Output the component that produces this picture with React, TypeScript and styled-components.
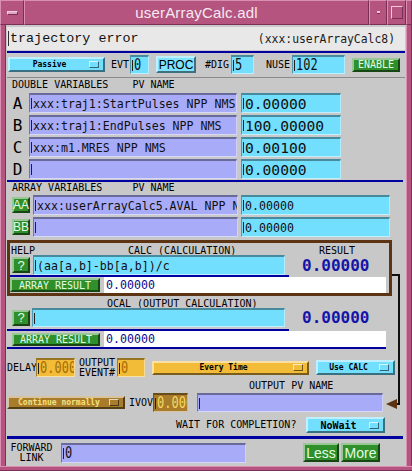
import React from "react";
import styled, { createGlobalStyle, css } from "styled-components";

const PINK = "#b4547f";
const PINK_LIGHT = "#d98fb1";
const PINK_DARK = "#7a3056";
const GREY = "#c8c8c8";
const CYAN = "#73dfff";
const LAV = "#a8abf7";
const GREEN = "#2f8f2a";
const NAVY = "#0000a0";
const BROWN = "#5c3414";
const YELLOW = "#f2bb38";
const GOLD = "#a87c2a";
const RESULT_BLUE = "#1414a8";

const MONO = `"DejaVu Sans Mono", "Liberation Mono", monospace`;
const SANS = `"Liberation Sans", Arial, sans-serif`;

const GlobalStyle = createGlobalStyle`
  html, body { margin: 0; padding: 0; }
  body { background: ${GREY}; overflow: hidden; }
  * { box-sizing: border-box; }
`;

const bevel = (light: string, dark: string, w = 1) => css`
  border-style: solid;
  border-width: ${w}px;
  border-color: ${light} ${dark} ${dark} ${light};
`;

const Window = styled.div`
  position: relative;
  width: 412px;
  height: 471px;
  background: ${PINK};
  display: flex;
  flex-direction: column;
`;

const TitleBar = styled.div`
  display: flex;
  height: 25px;
  flex: none;
`;

const TitleBox = styled.div<{ $w: number }>`
  flex: none;
  width: ${(p) => p.$w}px;
  height: 100%;
  display: flex;
  align-items: center;
  justify-content: center;
  background: ${PINK};
  ${bevel(PINK_LIGHT, PINK_DARK)};
`;

const MinusGlyph = styled.div`
  width: 11px;
  height: 4px;
  background: #e3a6c2;
  ${bevel("#f3d0e0", PINK_DARK)};
`;

const DotGlyph = styled.div`
  width: 3px;
  height: 3px;
  background: #f0c8da;
  border-bottom: 1px solid ${PINK_DARK};
`;

const MaxGlyph = styled.div`
  width: 12px;
  height: 13px;
  ${bevel("#f0c8da", PINK_DARK)};
`;

const Title = styled.div`
  flex: 1;
  display: flex;
  align-items: center;
  justify-content: center;
  font-family: ${SANS};
  font-size: 15px;
  letter-spacing: 0.2px;
  color: #f6eaf0;
  ${bevel(PINK_LIGHT, PINK_DARK)};
`;

const FrameRow = styled.div`
  display: flex;
  height: 441px;
  flex: none;
`;

const SideEdge = styled.div`
  flex: none;
  width: 6px;
  height: 100%;
  background: ${PINK};
  border-left: 1px solid ${PINK_LIGHT};
  border-right: 1px solid ${PINK_DARK};
`;

const BottomEdge = styled.div`
  flex: none;
  height: 5px;
  background: ${PINK};
  border-top: 1px solid ${PINK_LIGHT};
  border-bottom: 1px solid ${PINK_DARK};
`;

const Body = styled.div`
  flex: none;
  width: 400px;
  height: 441px;
  background: ${GREY};
  display: flex;
  flex-direction: column;
  font-family: ${MONO};
`;

const DescBand = styled.div`
  flex: none;
  margin: 2px 0 0 1px;
  width: 398px;
  height: 23px;
  background: #e8e8e8;
  display: flex;
  align-items: center;
  padding: 0 10px 0 1px;
`;

const DescText = styled.span`
  display: flex;
  align-items: center;
  font-family: "Liberation Mono", "Courier New", monospace;
  font-size: 13.4px;
  color: #101010;
  &::before {
    content: "";
    width: 1px;
    height: 15px;
    background: #303030;
    margin-right: 1px;
  }
`;

const RecordName = styled.span`
  margin-left: auto;
  font-family: ${MONO};
  font-size: 11.4px;
  color: #1a1a1a;
`;

const Rule = styled.div<{ $w: number; $h?: number; $mt?: number; $ml?: number; $c?: string }>`
  flex: none;
  width: ${(p) => p.$w}px;
  height: ${(p) => p.$h ?? 2}px;
  margin-top: ${(p) => p.$mt ?? 0}px;
  margin-left: ${(p) => p.$ml ?? 0}px;
  background: ${(p) => p.$c ?? NAVY};
`;

const Row = styled.div<{ $h: number; $mt?: number; $pl?: number }>`
  flex: none;
  display: flex;
  align-items: center;
  height: ${(p) => p.$h}px;
  margin-top: ${(p) => p.$mt ?? 0}px;
  padding-left: ${(p) => p.$pl ?? 0}px;
`;

const Stack = styled.div<{ $mt?: number; $gap?: number }>`
  flex: none;
  display: flex;
  flex-direction: column;
  gap: ${(p) => p.$gap ?? 2}px;
  margin-top: ${(p) => p.$mt ?? 0}px;
`;

const Label = styled.span<{ $ml?: number; $w?: number; $lh?: number; $center?: boolean }>`
  flex: none;
  display: block;
  margin-left: ${(p) => p.$ml ?? 0}px;
  ${(p) => (p.$w ? `width: ${p.$w}px;` : "")}
  font-family: ${MONO};
  font-size: 10px;
  line-height: ${(p) => p.$lh ?? 10}px;
  color: #000;
  white-space: pre;
  text-align: ${(p) => (p.$center ? "center" : "left")};
`;

const SectionLabel = styled.div<{ $mt?: number; $h: number; $pl: number }>`
  flex: none;
  height: ${(p) => p.$h}px;
  line-height: ${(p) => p.$h}px;
  margin-top: ${(p) => p.$mt ?? 0}px;
  padding-left: ${(p) => p.$pl}px;
  font-family: ${MONO};
  font-size: 10px;
  color: #000;
  white-space: pre;
`;

const Entry = styled.div<{
  $w: number;
  $h: number;
  $bg: string;
  $fg?: string;
  $ml?: number;
  $size?: number;
}>`
  flex: none;
  width: ${(p) => p.$w}px;
  height: ${(p) => p.$h}px;
  margin-left: ${(p) => p.$ml ?? 0}px;
  background: ${(p) => p.$bg};
  color: ${(p) => p.$fg ?? "#101010"};
  font-family: ${MONO};
  font-size: ${(p) => p.$size ?? 11.6}px;
  display: flex;
  align-items: center;
  padding-left: 1px;
  white-space: pre;
  overflow: hidden;
  border-top: 2px solid rgba(0, 0, 0, 0.38);
  border-left: 1px solid rgba(0, 0, 0, 0.32);
  border-bottom: 1px solid rgba(255, 255, 255, 0.55);
  border-right: 1px solid rgba(255, 255, 255, 0.45);
  &::before {
    content: "";
    flex: none;
    width: 1px;
    height: 11px;
    background: #202020;
    margin-right: 1px;
  }
`;

/* narrow, tall digits used in the small numeric entries */
const Tall = styled.span`
  display: inline-block;
  font-family: ${MONO};
  font-size: 12px;
  transform: scaleY(1.3);
  transform-origin: center;
`;

const Readout = styled.div<{ $w: number; $h: number; $ml?: number }>`
  flex: none;
  width: ${(p) => p.$w}px;
  height: ${(p) => p.$h}px;
  margin-left: ${(p) => p.$ml ?? 0}px;
  background: #ffffff;
  color: #0c0c8c;
  font-family: ${MONO};
  font-size: 11.6px;
  display: flex;
  align-items: center;
  padding-left: 2px;
`;

const Btn = styled.div<{
  $w: number;
  $h: number;
  $ml?: number;
  $bg?: string;
  $fg?: string;
  $size?: number;
  $family?: string;
}>`
  flex: none;
  width: ${(p) => p.$w}px;
  height: ${(p) => p.$h}px;
  margin-left: ${(p) => p.$ml ?? 0}px;
  background: ${(p) => p.$bg ?? GREEN};
  color: ${(p) => p.$fg ?? "#e4fbe4"};
  font-family: ${(p) => p.$family ?? MONO};
  font-size: ${(p) => p.$size ?? 10}px;
  display: flex;
  align-items: center;
  justify-content: center;
  white-space: pre;
  ${bevel("rgba(255,255,255,0.5)", "rgba(0,0,0,0.5)", 2)};
`;

const Menu = styled.div<{ $w: number; $h: number; $ml?: number; $bg: string; $fg?: string; $size?: number }>`
  flex: none;
  width: ${(p) => p.$w}px;
  height: ${(p) => p.$h}px;
  margin-left: ${(p) => p.$ml ?? 0}px;
  background: ${(p) => p.$bg};
  color: ${(p) => p.$fg ?? "#000"};
  font-family: ${MONO};
  font-weight: bold;
  font-size: ${(p) => p.$size ?? 8}px;
  display: flex;
  align-items: center;
  white-space: pre;
  ${bevel("rgba(255,255,255,0.55)", "rgba(0,0,0,0.5)", 2)};
`;

const MenuText = styled.span`
  flex: 1;
  text-align: center;
`;

const MenuMark = styled.span`
  flex: none;
  width: 10px;
  height: 7px;
  margin-right: 4px;
  ${bevel("rgba(255,255,255,0.7)", "rgba(0,0,0,0.55)", 1)};
`;

const Letter = styled.span`
  flex: none;
  width: 23px;
  text-align: center;
  font-family: ${MONO};
  font-size: 16px;
  color: #000;
`;

const CalcBox = styled.div`
  flex: none;
  margin: 3px 0 0 1px;
  width: 385px;
  height: 56px;
  border: 3px solid ${BROWN};
  display: flex;
  flex-direction: column;
`;

const Result = styled.span<{ $ml: number }>`
  flex: none;
  margin-left: ${(p) => p.$ml}px;
  font-family: ${MONO};
  font-weight: bold;
  font-size: 16px;
  color: ${RESULT_BLUE};
`;

const ArrowOverlay = styled.svg`
  position: absolute;
  left: 384px;
  top: 268px;
  width: 20px;
  height: 146px;
  overflow: visible;
`;

export default function App() {
  const doubles = [
    { k: "A", pv: "xxx:traj1:StartPulses NPP NMS", v: "0.00000" },
    { k: "B", pv: "xxx:traj1:EndPulses NPP NMS", v: "100.00000" },
    { k: "C", pv: "xxx:m1.MRES NPP NMS", v: "0.00100" },
    { k: "D", pv: "", v: "0.00000" },
  ];
  const arrays = [
    { k: "AA", pv: "xxx:userArrayCalc5.AVAL NPP NMS", v: "0.00000" },
    { k: "BB", pv: "", v: "0.00000" },
  ];
  return (
    <>
      <GlobalStyle />
      <Window>
        <TitleBar>
          <TitleBox $w={24}>
            <MinusGlyph />
          </TitleBox>
          <Title>userArrayCalc.adl</Title>
          <TitleBox $w={18}>
            <DotGlyph />
          </TitleBox>
          <TitleBox $w={19}>
            <MaxGlyph />
          </TitleBox>
          <TitleBox $w={6} />
        </TitleBar>
        <FrameRow>
          <SideEdge />
          <Body>
            <DescBand>
              <DescText>trajectory error</DescText>
              <RecordName>(xxx:userArrayCalc8)</RecordName>
            </DescBand>
            <Rule $w={398} $h={2} $mt={1} $ml={1} />
            <Row $h={19} $mt={2}>
              <Menu $w={97} $h={15} $ml={2} $bg={CYAN}>
                <MenuText>Passive</MenuText>
                <MenuMark />
              </Menu>
              <Label $ml={6} $w={19}>EVT</Label>
              <Entry $w={19} $h={19} $bg={CYAN}><Tall>0</Tall></Entry>
              <Btn $w={40} $h={17} $ml={7} $bg="#7fe2ff" $fg="#000" $family={SANS} $size={12}>
                PROC
              </Btn>
              <Label $ml={9} $w={24}>#DIG</Label>
              <Entry $w={23} $h={19} $ml={2} $bg={CYAN}><Tall>5</Tall></Entry>
              <Label $ml={12} $w={24}>NUSE</Label>
              <Entry $w={53} $h={19} $ml={2} $bg={CYAN}><Tall>102</Tall></Entry>
              <Btn $w={48} $h={14} $ml={7} $size={10}>ENABLE</Btn>
            </Row>
            <Rule $w={398} $h={1} $mt={3} $ml={1} $c="#8a8a8a" />
            <SectionLabel $h={11} $mt={1} $pl={6}>DOUBLE VARIABLES    PV NAME</SectionLabel>
            <Stack $mt={3} $gap={2}>
              {doubles.map((d) => (
                <Row key={d.k} $h={20}>
                  <Letter>{d.k}</Letter>
                  <Entry $w={208} $h={20} $bg={LAV}>{d.pv}</Entry>
                  <Entry $w={100} $h={20} $ml={4} $bg={CYAN} $size={14.6}>{d.v}</Entry>
                </Row>
              ))}
            </Stack>
            <Rule $w={396} $h={2} $mt={1} $ml={1} />
            <SectionLabel $h={10} $mt={1} $pl={6}>ARRAY VARIABLES     PV NAME</SectionLabel>
            <Stack $mt={2} $gap={2}>
              {arrays.map((a) => (
                <Row key={a.k} $h={20} $pl={6}>
                  <Btn $w={18} $h={16} $family={SANS} $size={12}>{a.k}</Btn>
                  <Entry $w={205} $h={20} $ml={3} $bg={LAV}>{a.pv}</Entry>
                  <Entry $w={149} $h={20} $ml={3} $bg={CYAN}>{a.v}</Entry>
                </Row>
              ))}
            </Stack>
            <CalcBox>
              <Row $h={9} $mt={3}>
                <Label $ml={1} $w={24} $lh={9}>HELP</Label>
                <Label $ml={93} $w={110} $lh={9}>CALC (CALCULATION)</Label>
                <Label $ml={81} $w={40} $lh={9}>RESULT</Label>
              </Row>
              <Row $h={20}>
                <Btn $w={18} $h={16} $ml={2} $family={SANS} $size={13}>?</Btn>
                <Entry $w={252} $h={20} $ml={3} $bg={CYAN}>(aa[a,b]-bb[a,b])/c</Entry>
                <Result $ml={17}>0.00000</Result>
              </Row>
              <Rule $w={279} $h={2} />
              <Row $h={16}>
                <Btn $w={90} $h={14}>ARRAY RESULT</Btn>
                <Readout $w={282} $h={16} $ml={4}>0.00000</Readout>
              </Row>
            </CalcBox>
            <Row $h={8} $mt={4}>
              <Label $ml={101} $lh={8}>OCAL (OUTPUT CALCULATION)</Label>
            </Row>
            <Row $h={19}>
              <Btn $w={18} $h={16} $ml={6} $family={SANS} $size={13}>?</Btn>
              <Entry $w={253} $h={19} $ml={2} $bg={CYAN}></Entry>
              <Result $ml={17}>0.00000</Result>
            </Row>
            <Rule $w={282} $h={2} $mt={2} $ml={1} />
            <Row $h={16}>
              <Btn $w={88} $h={13} $ml={6}>ARRAY RESULT</Btn>
              <Readout $w={282} $h={16} $ml={4}>0.00000</Readout>
            </Row>
            <Rule $w={379} $h={2} $ml={1} />
            <Row $h={21} $mt={8}>
              <Label $ml={1} $w={29}>DELAY</Label>
              <Entry $w={39} $h={19} $bg={YELLOW} $fg="#a66c00"><Tall>0.000</Tall></Entry>
              <Label $ml={4} $w={35}>{"OUTPUT\nEVENT#"}</Label>
              <Entry $w={28} $h={19} $ml={3} $bg={YELLOW} $fg="#a66c00"><Tall>0</Tall></Entry>
              <Menu $w={157} $h={14} $ml={7} $bg={YELLOW}>
                <MenuText>Every Time</MenuText>
                <MenuMark />
              </Menu>
              <Menu $w={79} $h={15} $ml={7} $bg={CYAN}>
                <MenuText>Use CALC</MenuText>
                <MenuMark />
              </Menu>
            </Row>
            <Row $h={8} $mt={4}>
              <Label $ml={243} $lh={8}>OUTPUT PV NAME</Label>
            </Row>
            <Row $h={19} $mt={3}>
              <Menu $w={118} $h={13} $ml={1} $bg={GOLD} $fg="#f6e27e">
                <MenuText>Continue normally</MenuText>
                <MenuMark />
              </Menu>
              <Label $ml={4} $w={24}>IVOV</Label>
              <Entry $w={35} $h={19} $bg={GOLD} $fg="#f8d860"><Tall>0.000</Tall></Entry>
              <Entry $w={186} $h={19} $ml={9} $bg={LAV}></Entry>
            </Row>
            <Row $h={18} $mt={4}>
              <Label $ml={170} $w={120}>WAIT FOR COMPLETION?</Label>
              <Menu $w={79} $h={16} $ml={10} $bg={CYAN} $size={10}>
                <MenuText>NoWait</MenuText>
                <MenuMark />
              </Menu>
            </Row>
            <Rule $w={396} $h={3} $mt={2} $ml={1} />
            <Row $h={23} $mt={2}>
              <Label $ml={4} $w={43} $center>{"FORWARD\nLINK"}</Label>
              <Entry $w={185} $h={20} $ml={8} $bg={LAV}><Tall>0</Tall></Entry>
              <Btn $w={36} $h={19} $ml={57} $family={SANS} $size={14}>Less</Btn>
              <Btn $w={39} $h={19} $ml={2} $family={SANS} $size={14}>More</Btn>
            </Row>
          </Body>
          <SideEdge />
        </FrameRow>
        <BottomEdge />
        <ArrowOverlay viewBox="0 0 20 146">
          <polyline points="8,7 15,7 15,136 12,136" fill="none" stroke="#101010" strokeWidth="2" />
          <polygon points="2,136 13,131 13,141" fill={BROWN} />
        </ArrowOverlay>
      </Window>
    </>
  );
}
